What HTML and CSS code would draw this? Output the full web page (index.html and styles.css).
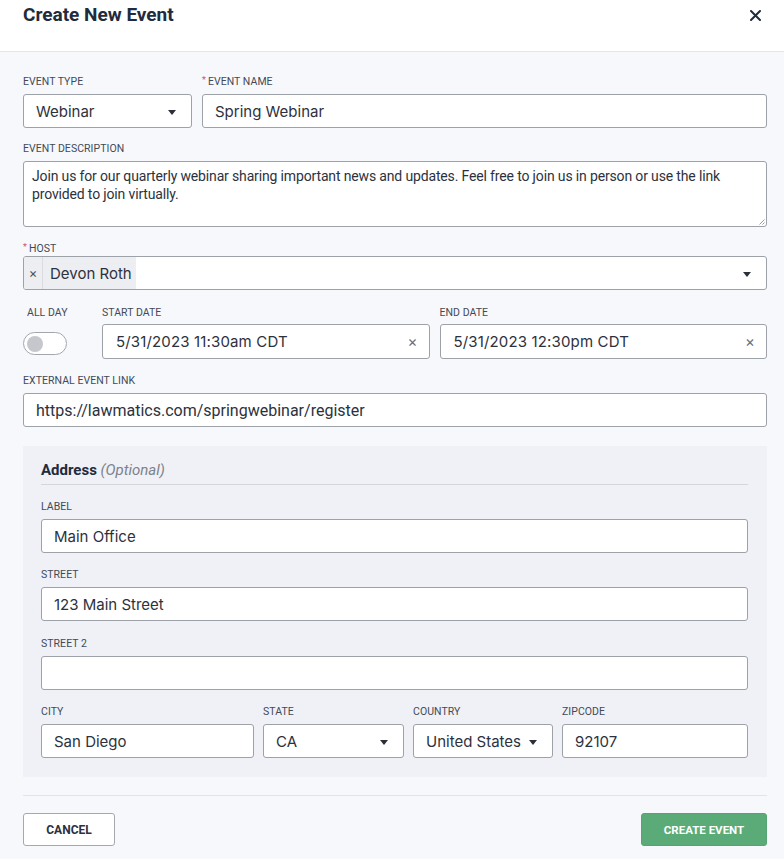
FILE: index.html
```html
<!DOCTYPE html>
<html lang="en">
<head>
<meta charset="utf-8">
<title>Create New Event</title>
<link rel="stylesheet" href="styles.css">
</head>
<body>
<div class="modal">
  <header class="modal-header">
    <h1 class="modal-title">Create New Event</h1>
    <svg class="close" width="11" height="11" viewBox="0 0 11 11"><path d="M1 1 L10 10 M10 1 L1 10" stroke="#222b3b" stroke-width="2" stroke-linecap="round"/></svg>
  </header>

  <main class="modal-body">
    <div class="row row-top">
      <div class="field">
        <label class="label">Event Type</label>
        <div class="control select"><span class="value">Webinar</span><span class="caret"></span></div>
      </div>
      <div class="field">
        <label class="label"><span class="req">*</span>Event Name</label>
        <div class="control"><span class="value">Spring Webinar</span></div>
      </div>
    </div>

    <div class="field">
      <label class="label">Event Description</label>
      <div class="control textarea"><span class="narrow-text">Join us for our quarterly webinar sharing important news and updates. Feel free to join us in person or use the link provided to join virtually.</span>
        <svg class="grip" width="7" height="7" viewBox="0 0 7 7"><path d="M6.5 1.5 L1.5 6.5 M6.5 4.5 L4.5 6.5" stroke="#8a8d93" stroke-width="0.9" fill="none"/></svg>
      </div>
    </div>

    <div class="field field-host">
      <label class="label"><span class="req">*</span>Host</label>
      <div class="control host">
        <span class="chip"><span class="chip-x">&#xd7;</span><span class="chip-text">Devon Roth</span></span>
        <span class="caret"></span>
      </div>
    </div>

    <div class="row row-dates">
      <div class="field allday">
        <label class="label">All Day</label>
        <span class="toggle"><span class="knob"></span></span>
      </div>
      <div class="field field-date">
        <label class="label">Start Date</label>
        <div class="control date"><span class="value">5/31/2023 11:30am CDT</span><span class="clear">&#xd7;</span></div>
      </div>
      <div class="field field-date">
        <label class="label">End Date</label>
        <div class="control date"><span class="value">5/31/2023 12:30pm CDT</span><span class="clear">&#xd7;</span></div>
      </div>
    </div>

    <div class="field field-link">
      <label class="label">External Event Link</label>
      <div class="control"><span class="narrow-text link">https://lawmatics.com/springwebinar/register</span></div>
    </div>

    <section class="address">
      <h2 class="address-title">Address <em>(Optional)</em></h2>
      <div class="field">
        <label class="label">Label</label>
        <div class="control"><span class="value">Main Office</span></div>
      </div>
      <div class="field">
        <label class="label">Street</label>
        <div class="control"><span class="value">123 Main Street</span></div>
      </div>
      <div class="field field-street2">
        <label class="label">Street 2</label>
        <div class="control"></div>
      </div>
      <div class="row row-city">
        <div class="field">
          <label class="label">City</label>
          <div class="control"><span class="value">San Diego</span></div>
        </div>
        <div class="field">
          <label class="label">State</label>
          <div class="control select"><span class="value">CA</span><span class="caret"></span></div>
        </div>
        <div class="field">
          <label class="label">Country</label>
          <div class="control select"><span class="value">United States</span><span class="caret"></span></div>
        </div>
        <div class="field">
          <label class="label">Zipcode</label>
          <div class="control"><span class="value">92107</span></div>
        </div>
      </div>
    </section>
  </main>

  <footer class="modal-footer">
    <button class="btn btn-cancel">Cancel</button>
    <button class="btn btn-primary">Create Event</button>
  </footer>
</div>
</body>
</html>
```

FILE: styles.css
```css
* { box-sizing: border-box; }
html, body { margin: 0; padding: 0; }
body {
  background: #f7f8fc;
  font-family: Inter, Roboto, "Liberation Sans", sans-serif;
  color: #2a303b;
}
.modal { width: 784px; min-height: 859px; background: #f7f8fc; }

.modal-header {
  height: 52px;
  background: #ffffff;
  border-bottom: 1px solid #e4e6eb;
  display: flex;
  justify-content: space-between;
  align-items: flex-start;
  padding: 4px 23px 0 23px;
}
.modal-title {
  margin: 0;
  font-family: Roboto, "Liberation Sans", sans-serif;
  font-weight: 700;
  font-size: 19px;
  line-height: 22px;
  color: #222b3b;
}
.close { margin-top: 6px; margin-right: 0; }

.modal-body {
  padding: 22px 17px 0 23px;
  display: flex;
  flex-direction: column;
  gap: 13px;
}
.field { display: flex; flex-direction: column; gap: 5px; min-width: 0; }
.field-host { gap: 0; margin-top: 1px; }
.field-date { gap: 4px; }
.field-link { margin-top: 1px; }
.label {
  font-family: Roboto, "Liberation Sans", sans-serif;
  font-size: 10.5px;
  line-height: 14px;
  height: 15px;
  padding-top: 1px;
  text-transform: uppercase;
  color: #434a57;
  letter-spacing: 0.05px;
}
.req {
  color: #d9534f;
  font-size: 9px;
  line-height: 0;
  margin-right: 2px;
  position: relative;
  top: -2px;
}

.row { display: grid; gap: 10px; }
.row-top { grid-template-columns: 169px 1fr; }
.row-dates { grid-template-columns: 69px 1fr 1fr; margin-top: 2px; }
.row-city { grid-template-columns: 213px 141px 140px 1fr; gap: 9px; }

.control {
  position: relative;
  height: 34px;
  background: #ffffff;
  border: 1px solid #9da1a8;
  border-radius: 3px;
  display: flex;
  align-items: center;
  padding: 0 12px;
  font-size: 15px;
  color: #2c323d;
}
.value { white-space: nowrap; }
.select .value, .date .value { flex: 1; }
.caret {
  width: 0; height: 0;
  border-left: 4px solid transparent;
  border-right: 4px solid transparent;
  border-top: 5px solid #2a2f38;
  margin-left: auto;
  margin-right: 3px;
  margin-top: 2px;
}
.date { padding-left: 13px; height: 35px; }
.date .value { letter-spacing: 0.15px; }
.clear { color: #6b6f77; font-size: 15px; margin-left: auto; margin-right: -1px; }

.narrow-text {
  font-family: Roboto, "Liberation Sans", sans-serif;
  color: #2c323d;
}
.textarea {
  height: 66px;
  align-items: flex-start;
  padding: 5px 8px;
}
.textarea .narrow-text { font-size: 14px; line-height: 18px; letter-spacing: -0.15px; }
.grip { position: absolute; right: 1px; bottom: 1px; }
.link { font-size: 16px; }

.host { padding: 0 12px 0 0; }
.host .caret { margin-right: 3px; }
.chip {
  align-self: stretch;
  display: flex;
  align-items: center;
  background: #eceef2;
  border-radius: 2px 0 0 2px;
}
.chip-x {
  width: 19px;
  font-size: 13px;
  color: #4a4f58;
  border-right: 1px solid #dadce1;
  align-self: stretch;
  display: flex; align-items: center; justify-content: center;
}
.chip-text { padding: 0 4px 0 7px; font-size: 15px; color: #2c323d; }

.allday .label { padding-left: 4px; }
.toggle {
  margin-top: 7px;
  width: 44px;
  height: 23px;
  border: 1px solid #a3a6ad;
  border-radius: 12px;
  background: #ffffff;
  display: flex;
  align-items: center;
  padding-left: 3px;
}
.knob { width: 16px; height: 16px; border-radius: 50%; background: #c5c7cc; }

.address {
  margin-top: 6px;
  background: #eff1f6;
  padding: 14px 19px 19px 18px;
  display: flex;
  flex-direction: column;
  gap: 14px;
}
.field-street2 { margin-top: 1px; }
.address-title {
  margin: 0;
  padding-bottom: 4px;
  border-bottom: 1px solid #d3d6dc;
  font-family: Roboto, "Liberation Sans", sans-serif;
  font-size: 15px;
  line-height: 20px;
  font-weight: 700;
  color: #222b3b;
}
.address-title em { font-weight: 400; color: #7c818b; }

.modal-footer {
  margin: 18px 17px 0 23px;
  border-top: 1px solid #e2e4e9;
  padding-top: 17px;
  display: flex;
  justify-content: space-between;
}
.btn {
  height: 33px;
  border-radius: 3px;
  font-family: Roboto, "Liberation Sans", sans-serif;
  font-weight: 700;
  text-transform: uppercase;
  cursor: pointer;
}
.btn-cancel {
  width: 92px;
  background: #ffffff;
  border: 1px solid #a5a8b0;
  color: #2a3142;
  font-size: 12px;
}
.btn-primary {
  width: 126px;
  background: #5aab78;
  border: 1px solid #55a473;
  color: #ffffff;
  font-size: 11.5px;
}
```
